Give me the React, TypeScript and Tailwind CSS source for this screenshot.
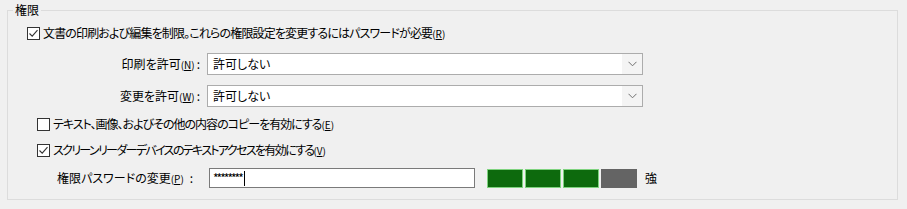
import React from 'react'

const font = "font-['Noto_Sans_CJK_JP','Noto_Sans',sans-serif] [font-feature-settings:'palt']"

function Mnemonic({ k }: { k: string }) {
  return (
    <span className="text-[10px] tracking-normal">
      (<span className="underline underline-offset-1">{k}</span>)
    </span>
  )
}

function CheckBox({ checked }: { checked: boolean }) {
  return (
    <span className="flex h-[13px] w-[13px] shrink-0 items-center justify-center border border-[#333333] bg-white">
      {checked && (
        <svg width="11" height="11" viewBox="0 0 11 11">
          <path d="M1.5 5.5 L4.2 8.2 L9.5 2.2" fill="none" stroke="#333333" strokeWidth="1.1" />
        </svg>
      )}
    </span>
  )
}

function CheckRow({
  checked,
  label,
  k,
  indent,
  tracking,
}: {
  checked: boolean
  label: string
  k: string
  indent: string
  tracking: string
}) {
  return (
    <div className={`flex h-[16px] items-center gap-[3px] ${indent}`}>
      <CheckBox checked={checked} />
      <span className="leading-none">
        <span className={tracking}>{label}</span>
        <Mnemonic k={k} />
      </span>
    </div>
  )
}

function ComboRow({ label, k, value }: { label: string; k: string; value: string }) {
  return (
    <div className="flex h-[22px] items-center">
      <div className="w-[199px] pr-[7px] text-right leading-none">
        {label}
        <Mnemonic k={k} />
        <span className="ml-[2px]">:</span>
      </div>
      <div className="flex h-[22px] w-[436px] border border-[#acacac] bg-white">
        <div className="flex flex-1 items-center pl-[5px] leading-none">{value}</div>
        <div className="flex w-[20px] items-center justify-center bg-[#f4f4f4]">
          <svg width="9" height="6" viewBox="0 0 9 6">
            <path d="M0.5 0.8 L4.5 4.8 L8.5 0.8" fill="none" stroke="#707070" strokeWidth="1" />
          </svg>
        </div>
      </div>
    </div>
  )
}

export default function App() {
  const bars = ['#0d6a0d', '#0d6a0d', '#0d6a0d']
  return (
    <div className={`h-[209px] w-[907px] bg-[#f0f0f0] pl-[7px] pt-[10px] text-[12px] text-black ${font}`}>
      <div className="relative h-[190px] w-[891px] border border-[#dcdcdc]">
        <span className="absolute -top-[9px] left-[5px] bg-[#f0f0f0] px-[2px] leading-[16px]">権限</span>

        <div className="pt-[14px]">
          <CheckRow
            checked
            label="文書の印刷および編集を制限。これらの権限設定を変更するにはパスワードが必要"
            k="R"
            indent="pl-[19px]"
            tracking="tracking-[-0.85px]"
          />
        </div>

        <div className="mt-[12px]">
          <ComboRow label="印刷を許可" k="N" value="許可しない" />
        </div>
        <div className="mt-[10px]">
          <ComboRow label="変更を許可" k="W" value="許可しない" />
        </div>

        <div className="mt-[9px]">
          <CheckRow
            checked={false}
            label="テキスト、画像、およびその他の内容のコピーを有効にする"
            k="E"
            indent="pl-[29px]"
            tracking="tracking-[-1px]"
          />
        </div>
        <div className="mt-[10px]">
          <CheckRow
            checked
            label="スクリーンリーダーデバイスのテキストアクセスを有効にする"
            k="V"
            indent="pl-[29px]"
            tracking="tracking-[-1.65px]"
          />
        </div>

        <div className="mt-[10px] flex h-[20px] items-center">
          <div className="w-[201px] pl-[49px] leading-none">
            権限パスワードの変更
            <Mnemonic k="P" />
            <span className="ml-[6px]">:</span>
          </div>
          <div className="flex h-[20px] w-[266px] items-center border border-[#7a7a7a] bg-white pl-[3px] leading-none">
            <span className="text-[12px] tracking-[-2px]">********</span>
            <span className="ml-[2px] h-[15px] w-px bg-black" />
          </div>
          <div className="ml-[12px] flex gap-[2px]">
            {bars.map((c, i) => (
              <div key={i} className="h-[19px] w-[36px] border border-[#7fd37f]" style={{ background: c }} />
            ))}
            <div className="h-[19px] w-[36px] bg-[#646464]" />
          </div>
          <span className="ml-[8px] leading-none">強</span>
        </div>
      </div>
    </div>
  )
}
